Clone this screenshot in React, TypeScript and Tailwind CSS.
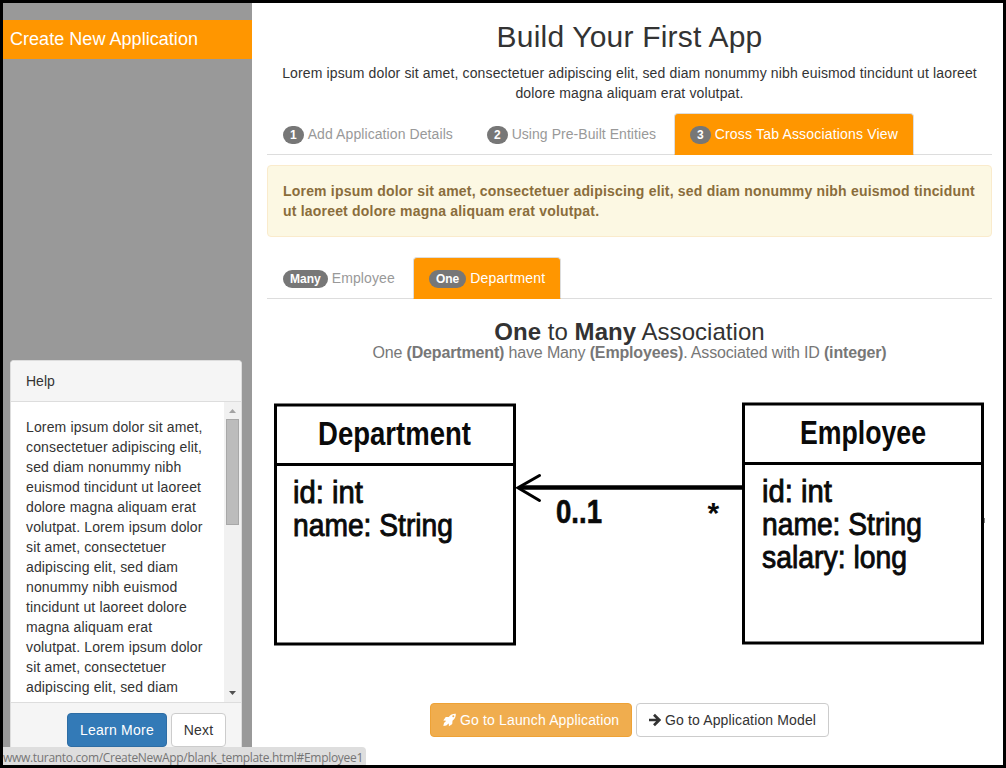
import React from "react";

const helpLines = [
  "Lorem ipsum dolor sit amet,",
  "consectetuer adipiscing elit,",
  "sed diam nonummy nibh",
  "euismod tincidunt ut laoreet",
  "dolore magna aliquam erat",
  "volutpat. Lorem ipsum dolor",
  "sit amet, consectetuer",
  "adipiscing elit, sed diam",
  "nonummy nibh euismod",
  "tincidunt ut laoreet dolore",
  "magna aliquam erat",
  "volutpat. Lorem ipsum dolor",
  "sit amet, consectetuer",
  "adipiscing elit, sed diam",
];

type TabProps = { badge: string; label: string; active?: boolean; spacing: string };

function Tab({ badge, label, active, spacing }: TabProps) {
  return (
    <a
      className={
        "mr-0.5 flex h-[42px] items-center gap-1 rounded-t border px-[15px] whitespace-nowrap " +
        (active ? "border-[#ddd] border-b-[#ff9600] bg-[#ff9600] text-white" : "border-transparent text-[#999]")
      }
    >
      <span className="mt-0.5 h-[18px] rounded-[10px] bg-[#777] px-[7px] text-[12px] leading-[18px] font-bold text-white">
        {badge}
      </span>
      <span className={"leading-5 " + spacing}>{label}</span>
    </a>
  );
}

function Tabs({ tabs }: { tabs: TabProps[] }) {
  return (
    <nav className="flex h-[42px] border-b border-[#ddd]">
      {tabs.map((t) => (
        <Tab key={t.label} {...t} />
      ))}
    </nav>
  );
}

function RocketIcon() {
  return (
    <svg className="h-[14px] w-[13px] shrink-0" viewBox="0 0 13 14" fill="currentColor">
      <path
        fillRule="evenodd"
        d="M12.800.700C9.800.500 7.700 1.500 5.800 3.900L3 4.100C2.700 4.100 2.600 4.200 2.400 4.500L.300 7.600L3 7.700L2.600 8.600C1.200 9.200.600 10.800.400 13.100C2.700 13 4.300 12.400 4.900 11.100L5.800 10.600L5.900 13.200L9 11.200C9.200 11 9.300 10.900 9.300 10.600L9.500 7.700C11.900 5.800 12.900 3.700 12.800.700ZM10.300 2.300A1 1 0 1 1 10.300 4.300A1 1 0 1 1 10.300 2.300Z"
      />
    </svg>
  );
}

function ArrowIcon() {
  return (
    <svg className="h-[14px] w-[12px] shrink-0" viewBox="0 0 12 14" fill="none" stroke="currentColor" strokeWidth="2.700">
      <path d="M0 7H10.300M5 1.700L10.300 7L5 12.300" />
    </svg>
  );
}

function DiagramText({ x, y, w, bold, children }: { x: number; y: number; w: number; bold?: boolean; children: string }) {
  return (
    <text
      x={x}
      y={y}
      textLength={w}
      lengthAdjust="spacingAndGlyphs"
      fontSize={bold ? 33 : 32}
      fontWeight={bold ? 700 : 400}
      stroke="#0a0a0a"
      strokeWidth={bold ? 0 : 0.9}
    >
      {children}
    </text>
  );
}

function AssociationDiagram() {
  return (
    <svg viewBox="267 393 725 260" className="block h-[260px] w-[725px]" fill="#0a0a0a" fontFamily="Liberation Sans, Arial, sans-serif">
      <g fill="none" stroke="#000" strokeWidth="3">
        <rect x="275.5" y="405" width="239" height="239" />
        <path d="M275 464.5H515" />
        <rect x="743.5" y="404" width="239" height="239" />
        <path d="M743 463.5H983" />
        <path d="M539.5 475.5L518 487.8L539.5 500.5" strokeLinecap="round" />
      </g>
      <path d="M520 487.5H743" stroke="#000" strokeWidth="4.5" />
      <rect x="983" y="518" width="1.5" height="5" />
      <DiagramText x={318} y={445} w={153} bold>Department</DiagramText>
      <DiagramText x={293} y={503} w={70}>id: int</DiagramText>
      <DiagramText x={293} y={536} w={160}>name: String</DiagramText>
      <DiagramText x={800} y={444} w={126} bold>Employee</DiagramText>
      <DiagramText x={762} y={502} w={70}>id: int</DiagramText>
      <DiagramText x={762} y={535} w={160}>name: String</DiagramText>
      <DiagramText x={762} y={568} w={145}>salary: long</DiagramText>
      <text x="556" y="523" fontSize="33" fontWeight="700" textLength="46" lengthAdjust="spacingAndGlyphs" stroke="#0a0a0a" strokeWidth="0.600">
        0..1
      </text>
      <text x="707.500" y="523" fontSize="30" fontWeight="700">*</text>
    </svg>
  );
}

export default function App() {
  return (
    <div className="relative flex h-[768px] w-[1006px] overflow-hidden border-3 border-black bg-white font-['Liberation_Sans',Arial,sans-serif] text-[14px] leading-5 text-[#333]">
      <aside className="flex w-[249px] shrink-0 flex-col bg-[#999]">
        <div className="mt-[17px] h-[39px] bg-[#ff9600] px-[7px] text-[18px] leading-[38px] tracking-[0.04px] whitespace-nowrap text-white">
          Create New Application
        </div>
        <section className="mx-[7px] mt-[301px] flex w-[232px] flex-1 flex-col rounded-t border border-b-0 border-[#ddd] bg-white">
          <header className="h-[41px] shrink-0 rounded-t border-b border-[#ddd] bg-[#f5f5f5] px-[15px] py-[10px]">Help</header>
          <div className="flex h-[300px] shrink-0">
            <div className="flex-1 pt-[15px] pl-[15px] tracking-[0.14px]">
              {helpLines.map((line, i) => (
                <div key={i} className="h-5 whitespace-nowrap">{line}</div>
              ))}
            </div>
            <div className="flex w-[17px] flex-col items-center bg-[#f1f1f1]">
              <svg className="h-[17px] w-[17px] shrink-0" viewBox="0 0 17 17">
                <path d="M5 11h7L8.500 7z" fill="#a3a3a3" />
              </svg>
              <div className="h-[106px] w-[13px] border border-[#a8a8a8] bg-[#bcbcbc]" />
              <div className="flex-1" />
              <svg className="h-[17px] w-[17px] shrink-0" viewBox="0 0 17 17">
                <path d="M5 6h7L8.500 10z" fill="#505050" />
              </svg>
            </div>
          </div>
          <footer className="flex flex-1 items-start justify-end gap-1 border-t border-[#ddd] bg-[#f5f5f5] pt-[10px] pr-[15px]">
            <button className="h-[34px] w-[100px] rounded border border-[#2e6da4] bg-[#337ab7] tracking-[0.22px] text-white">Learn More</button>
            <button className="h-[34px] w-[55px] rounded border border-[#ccc] bg-white tracking-[0.2px]">Next</button>
          </footer>
        </section>
      </aside>

      <main className="flex flex-1 flex-col pt-[17px] pr-[11px] pl-[15px]">
        <h1 className="text-center text-[30px] leading-[33px] tracking-[0.2px]">Build Your First App</h1>
        <p className="mt-[10px] mb-[10px] text-center tracking-[0.135px] whitespace-nowrap">
          Lorem ipsum dolor sit amet, consectetuer adipiscing elit, sed diam nonummy nibh euismod tincidunt ut laoreet
          <br />
          dolore magna aliquam erat volutpat.
        </p>
        <Tabs
          tabs={[
            { badge: "1", label: "Add Application Details", spacing: "tracking-[0.09px]" },
            { badge: "2", label: "Using Pre-Built Entities", spacing: "tracking-[0.05px]" },
            { badge: "3", label: "Cross Tab Associations View", active: true, spacing: "tracking-[0.18px]" },
          ]}
        />
        <div className="mt-[10px] mb-5 h-[72px] rounded border border-[#faebcc] bg-[#fcf8e3] p-[15px] font-bold tracking-[0.195px] whitespace-nowrap text-[#8a6d3b]">
          Lorem ipsum dolor sit amet, consectetuer adipiscing elit, sed diam nonummy nibh euismod tincidunt
          <br />
          ut laoreet dolore magna aliquam erat volutpat.
        </div>
        <Tabs
          tabs={[
            { badge: "Many", label: "Employee", spacing: "tracking-[0.12px]" },
            { badge: "One", label: "Department", active: true, spacing: "tracking-[0.2px]" },
          ]}
        />
        <h2 className="mt-5 text-center text-[24px] leading-[26px] tracking-[0.04px]">
          <b>One</b> to <b>Many</b> Association
        </h2>
        <p className="-mt-px text-center text-[16px] leading-[18px] tracking-[-0.155px] text-[#777]">
          One <b>(Department)</b> have Many <b>(Employees)</b>. Associated with ID <b>(integer)</b>
        </p>
        <div className="mt-[31px]">
          <AssociationDiagram />
        </div>
        <div className="mt-[50px] flex justify-center gap-1">
          <button className="flex h-[34px] w-[202px] items-center gap-1 rounded border border-[#eea236] bg-[#f0ad4e] pl-3 tracking-[0.15px] whitespace-nowrap text-white">
            <RocketIcon /> Go to Launch Application
          </button>
          <button className="flex h-[34px] w-[193px] items-center gap-1 rounded border border-[#ccc] bg-white pl-3 tracking-[0.14px] whitespace-nowrap">
            <ArrowIcon /> Go to Application Model
          </button>
        </div>
      </main>

      <div className="absolute bottom-0 left-0 h-[18px] w-[363px] rounded-tr-sm bg-[#dedede] font-['Open_Sans','Noto_Sans',sans-serif] text-[12px] leading-[21px] tracking-[-0.31px] whitespace-nowrap text-[#757575]">
        www.turanto.com/CreateNewApp/blank_template.html#Employee1
      </div>
    </div>
  );
}
